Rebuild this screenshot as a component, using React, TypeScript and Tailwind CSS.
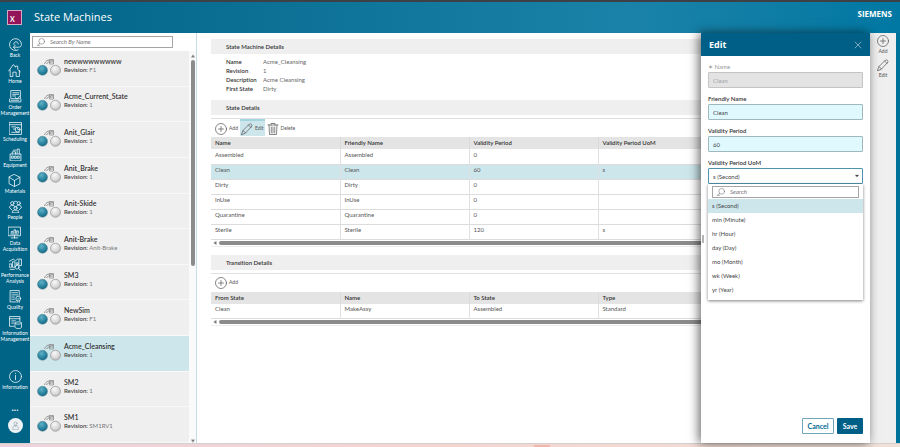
import type { ReactNode } from 'react';
import clsx from 'clsx';

type IconProps = { className?: string };

function Svg({ className, children, box = '0 0 24 24' }: IconProps & { children: ReactNode; box?: string }) {
  return (
    <svg
      viewBox={box}
      className={className}
      fill="none"
      stroke="currentColor"
      strokeWidth={1.4}
      strokeLinecap="round"
      strokeLinejoin="round"
      aria-hidden="true"
    >
      {children}
    </svg>
  );
}

const navIcons: Record<string, ReactNode> = {
  Back: (
    <>
      <path d="M17 22A11 11 0 1 1 23 12c0 3-2 5-5 5H9" />
      <path d="m12 13-4 4 4 4M9 12a4 4 0 0 1 4-5c3 0 4 2 4 4" />
    </>
  ),
  Home: <path d="M1 13 10 1l4 5V4h4v6l5 5M4 11v12h5v-8h6v8h6V12" />,
  Order: (
    <>
      <path d="M4 1h17v15H4zM7 5h11M7 8h11M7 11h5M1 17v5h21v-5" />
      <path d="m12 14 2 3 6-6M4 19h14" />
    </>
  ),
  Scheduling: (
    <>
      <path d="M1 1h22v22H1zM1 5h22M5 9h7M8 13h4" />
      <circle cx="16" cy="14" r="4.500" />
      <path d="M16 11v3h3M5 19h14" />
    </>
  ),
  Equipment: (
    <>
      <path d="M2 23V11h20v12zM6 11V7h6v4M15 11V2h4v9M8 4h5" />
      <path d="M5 15h3v4H5zM10.500 15h3v4h-3zM16 15h3v4h-3z" />
    </>
  ),
  Materials: <path d="m12 1 10 5v12l-10 5-10-5V6zM2 6l10 6 10-6M12 12v11" />,
  People: (
    <>
      <circle cx="6" cy="6" r="3" />
      <circle cx="18" cy="6" r="3" />
      <circle cx="12" cy="15" r="3" />
      <path d="M1 14c0-6 10-6 10-1M13 13c0-6 10-5 10 1M6 23c0-6 12-6 12 0zM9 3c1-1 5-1 6 0M2 15l4 4M22 15l-4 4" />
    </>
  ),
  Data: (
    <>
      <path d="M1 2h22v16H1zM12 18v4M6 22h12" />
      <path d="M6 13v-3h3v3M11 13V7h3v6M16 13V9h3v4M5 15h14" />
    </>
  ),
  Performance: (
    <>
      <path d="M1 11h4v6H1zM7 7h4v10H7zM14 9h3v3h-3zM19 2h4v12h-4zM1 6l7-4 4 3 5-4" />
      <circle cx="15" cy="17" r="3.500" />
      <path d="m18 20 4 3M2 21h8" />
    </>
  ),
  Quality: (
    <>
      <path d="M19 10V1H2v21h10M5 5h11M5 9h11M5 13h5M5 17h5" />
      <circle cx="17" cy="16" r="4.500" />
      <path d="m15 16 1.500 1.500L19 15M15 20v3M19 20v3" />
    </>
  ),
  InfoManagement: (
    <>
      <path d="M20 9V1H1v18h8M1 5h19M5 9h7M5 13h4" />
      <path d="M11 13c0-3 12-3 12 0v8c0 3-12 3-12 0zM11 13c0 3 12 3 12 0" />
    </>
  ),
  Information: (
    <>
      <circle cx="12" cy="12" r="11" />
      <path d="M12 10v8M12 6v.5" />
    </>
  ),
};

const navItems = [
  { icon: 'Back', lines: ['Back'] },
  { icon: 'Home', lines: ['Home'] },
  { icon: 'Order', lines: ['Order', 'Management'] },
  { icon: 'Scheduling', lines: ['Scheduling'] },
  { icon: 'Equipment', lines: ['Equipment'] },
  { icon: 'Materials', lines: ['Materials'] },
  { icon: 'People', lines: ['People'] },
  { icon: 'Data', lines: ['Data', 'Acquisition'] },
  { icon: 'Performance', lines: ['Performance', 'Analysis'] },
  { icon: 'Quality', lines: ['Quality'] },
  { icon: 'InfoManagement', lines: ['Information', 'Management'] },
];

const machines = [
  { name: 'newwwwwwwww', revision: 'F1' },
  { name: 'Acme_Current_State', revision: '1' },
  { name: 'Anit_Glair', revision: '1' },
  { name: 'Anit_Brake', revision: '1' },
  { name: 'Anit-Skide', revision: '1' },
  { name: 'Anit-Brake', revision: 'Anit-Brake' },
  { name: 'SM3', revision: '1' },
  { name: 'NewSim', revision: 'F1' },
  { name: 'Acme_Cleansing', revision: '1' },
  { name: 'SM2', revision: '1' },
  { name: 'SM1', revision: 'SM1RV1' },
];

const details = [
  ['Name', 'Acme_Cleansing'],
  ['Revision', '1'],
  ['Description', 'Acme Cleansing'],
  ['First State', 'Dirty'],
];

const states = [
  ['Assembled', 'Assembled', '0', ''],
  ['Clean', 'Clean', '60', 's'],
  ['Dirty', 'Dirty', '0', ''],
  ['InUse', 'InUse', '0', ''],
  ['Quarantine', 'Quarantine', '0', ''],
  ['Sterile', 'Sterile', '120', 's'],
];

const units = ['s (Second)', 'min (Minute)', 'hr (Hour)', 'day (Day)', 'mo (Month)', 'wk (Week)', 'yr (Year)'];

function AddIcon({ className }: IconProps) {
  return (
    <Svg className={className}>
      <circle cx="12" cy="12" r="11" />
      <path d="M12 7v10M7 12h10" />
    </Svg>
  );
}

function PencilIcon({ className }: IconProps) {
  return (
    <Svg className={className}>
      <path d="m1 23 3-8L17 2c2-2 6 2 5 4L9 20zM15 4l5 5M4 15l5 5" />
    </Svg>
  );
}

function TrashIcon({ className }: IconProps) {
  return (
    <Svg className={className}>
      <path d="M2 4h20M8 4V1h8v3M4 4l1 19h14l1-19M8.500 8v12M12 8v12M15.500 8v12" />
    </Svg>
  );
}

function SearchIcon({ className }: IconProps) {
  return (
    <Svg className={className}>
      <circle cx="14" cy="10" r="8.500" />
      <path d="m8 16-7 6h7" />
    </Svg>
  );
}

function StateIcon({ className }: IconProps) {
  return (
    <svg viewBox="0 0 48 34" className={className} fill="none" aria-hidden="true">
      <defs>
        <radialGradient id="tealBall" cx="0.4" cy="0.3" r="0.75">
          <stop offset="0" stopColor="#5fb0c6" />
          <stop offset="0.6" stopColor="#2a839f" />
          <stop offset="1" stopColor="#0f647f" />
        </radialGradient>
        <radialGradient id="grayBall" cx="0.4" cy="0.3" r="0.75">
          <stop offset="0" stopColor="#f8f8f8" />
          <stop offset="0.6" stopColor="#dadada" />
          <stop offset="1" stopColor="#b5b5b5" />
        </radialGradient>
      </defs>
      <path d="M15 10c3-8 9-10 18-6M19 10c2-4 5-5 9-4" stroke="#777" strokeWidth="1.500" />
      <path d="M25 1h8v9h-8zM25 6h8" stroke="#8a8a8a" strokeWidth="1.500" />
      <circle cx="11" cy="22.500" r="10" fill="url(#tealBall)" stroke="#5d8795" strokeWidth="1" />
      <circle cx="37" cy="22.500" r="10" fill="url(#grayBall)" stroke="#999" strokeWidth="1.500" />
    </svg>
  );
}

function NavItem({ icon, lines }: { icon: string; lines: string[] }) {
  return (
    <a href="#" className="flex flex-col items-center text-white">
      <Svg className="mb-px size-[13px]">{navIcons[icon]}</Svg>
      {lines.map((line) => (
        <span key={line} className="text-[5px] leading-[6px] whitespace-nowrap">
          {line}
        </span>
      ))}
    </a>
  );
}

function SideNav() {
  return (
    <nav className="flex w-[30px] shrink-0 flex-col items-center bg-[#006487] pt-[5px]">
      <div className="flex flex-col items-center gap-[6px]">
        {navItems.map((item) => (
          <NavItem key={item.icon} {...item} />
        ))}
      </div>
      <div className="mt-auto flex flex-col items-center pb-[10px]">
        <NavItem icon="Information" lines={['Information']} />
        <button className="mt-[14px] font-['Open_Sans',sans-serif] text-[8px] leading-[8px] font-bold text-white">...</button>
        <button aria-label="Profile" className="mt-[6px] flex size-[15px] items-center justify-center rounded-full bg-[#eef2f4]">
          <Svg className="size-[9px] text-[#8a9aa3]">
            <circle cx="12" cy="6" r="4" />
            <path d="M5 22v-7l4-3h6l4 3v7zM9 12l3 4 3-4" />
          </Svg>
        </button>
      </div>
    </nav>
  );
}

function MachineList() {
  return (
    <aside className="flex w-[167px] shrink-0 flex-col border-r border-[#c5dbe8] bg-white">
      <div className="flex h-[18px] shrink-0 items-center pl-[2px]">
        <label className="flex h-[12px] w-[141px] items-center gap-[5px] border border-[#a5a5a5] px-1">
          <SearchIcon className="size-2 shrink-0 text-[#555]" />
          <input
            aria-label="Search By Name"
            placeholder="Search By Name"
            className="w-full text-[6px] leading-[8px] italic outline-none placeholder:text-[#777]"
          />
        </label>
      </div>
      <div className="flex min-h-0 flex-1">
        <ul className="flex flex-1 flex-col">
          {machines.map((machine) => (
            <li
              key={machine.name}
              className={clsx(
                'flex flex-1 items-center gap-[3px] border-b border-[#f8f8f8] pb-[2px] pl-[7px]',
                machine.name === 'Acme_Cleansing' ? 'bg-[#cde6eb]' : 'bg-[#efefef]'
              )}
            >
              <StateIcon className="h-[17px] w-6" />
              <div className="pb-[5px]">
                <div className="text-[7px] leading-[10px] font-semibold text-[#333]">{machine.name}</div>
                <div className="text-[6px] leading-[8px] text-[#777]">
                  <span className="font-semibold text-[#444]">Revision:</span> {machine.revision}
                </div>
              </div>
            </li>
          ))}
        </ul>
        <div className="flex w-[7px] flex-col items-center bg-[#fafafa] pt-[3px]">
          <Svg className="size-1 text-[#777]">
            <path d="M2 20 12 4l10 16z" fill="currentColor" />
          </Svg>
          <div className="mt-[2px] h-[53%] w-1 rounded-full bg-[#8b8b8b]" />
          <Svg className="mt-auto size-1 text-[#777]">
            <path d="M2 4h20L12 20z" fill="currentColor" />
          </Svg>
        </div>
      </div>
    </aside>
  );
}

function SectionTitle({ children }: { children: ReactNode }) {
  return <h2 className="h-[15px] bg-[#efefef] pl-[15px] text-[6px] leading-[15px] font-semibold text-[#333]">{children}</h2>;
}

function Toolbar({ children }: { children: ReactNode }) {
  return <div className="mt-[3px] flex gap-px border-t border-[#e0e0e0] pb-px pl-[3px]">{children}</div>;
}

function ToolButton({ label, icon, active }: { label: string; icon: ReactNode; active?: boolean }) {
  return (
    <button
      className={clsx(
        'flex h-[17px] items-center gap-[2px] border-t-2 px-px text-[5px] text-[#555]',
        active ? 'border-[#a3d5de] bg-[#cde6eb]' : 'border-transparent'
      )}
    >
      {icon}
      {label}
    </button>
  );
}

function DataTable({ columns, rows, selected }: { columns: string[]; rows: string[][]; selected?: number }) {
  return (
    <>
      <table className="w-full table-fixed border-collapse text-left text-[6px] leading-[8px]">
        <colgroup>
          <col className="w-[129px]" />
          <col className="w-[129px]" />
          <col className="w-[129px]" />
          <col />
        </colgroup>
        <thead>
          <tr className="h-[12px] bg-[#e4e4e4]">
            {columns.map((column) => (
              <th key={column} className="border-r border-[#dadada] px-1 py-0 font-semibold text-[#333]">
                {column}
              </th>
            ))}
          </tr>
        </thead>
        <tbody>
          {rows.map((row, i) => (
            <tr key={row[0]} className={clsx('h-[15px] border-b border-[#dcdcdc]', i === selected && 'bg-[#cde6eb]')}>
              {row.map((cell, j) => (
                <td key={j} className="border-r border-[#e0e0e0] px-1 pt-0 pb-[3px] text-[#555]">
                  {cell}
                </td>
              ))}
            </tr>
          ))}
        </tbody>
      </table>
      <div className="flex h-[7px] items-center gap-[2px] border-b border-[#ececec] pl-[2px]">
        <Svg className="size-1 text-[#777]">
          <path d="M20 2v20L4 12z" fill="currentColor" />
        </Svg>
        <div className="h-1 flex-1 rounded-l-full bg-[#8b8b8b]" />
      </div>
    </>
  );
}

function Details() {
  return (
    <main className="min-w-0 flex-1 overflow-hidden bg-white pt-[6px] pl-[14px]">
      <SectionTitle>State Machine Details</SectionTitle>
      <dl className="grid grid-cols-[37px_1fr] pt-[3px] pb-[7px] pl-[15px] text-[6px] leading-[9px]">
        {details.map(([label, value]) => (
          <div key={label} className="contents">
            <dt className="font-semibold text-[#333]">{label}</dt>
            <dd className="text-[#666]">{value}</dd>
          </div>
        ))}
      </dl>
      <SectionTitle>State Details</SectionTitle>
      <Toolbar>
        <ToolButton label="Add" icon={<AddIcon className="size-3" />} />
        <ToolButton label="Edit" active icon={<PencilIcon className="size-3" />} />
        <ToolButton label="Delete" icon={<TrashIcon className="size-3" />} />
      </Toolbar>
      <DataTable
        columns={['Name', 'Friendly Name', 'Validity Period', 'Validity Period UoM']}
        rows={states}
        selected={1}
      />
      <div className="h-2" />
      <SectionTitle>Transition Details</SectionTitle>
      <Toolbar>
        <ToolButton label="Add" icon={<AddIcon className="size-3" />} />
      </Toolbar>
      <DataTable
        columns={['From State', 'Name', 'To State', 'Type']}
        rows={[['Clean', 'MakeAssy', 'Assembled', 'Standard']]}
      />
    </main>
  );
}

function Field({ label, value, disabled }: { label: string; value: string; disabled?: boolean }) {
  return (
    <label className={clsx('block text-[6px]', disabled ? 'text-[#999]' : 'font-semibold text-[#333]')}>
      <span className="block leading-[10px]">{label}</span>
      <input
        defaultValue={value}
        disabled={disabled}
        className={clsx(
          'block h-4 w-full rounded-[1px] border px-1 font-normal',
          disabled ? 'border-[#c4c4c4] bg-[#e3e3e3] text-[#a5a5a5]' : 'border-[#9fb8bd] bg-[#e0f9ff] text-[#444]'
        )}
      />
    </label>
  );
}

function EditPanel() {
  return (
    <section className="absolute inset-y-0 right-0 flex w-[169px] flex-col bg-white shadow-[-2px_0_10px_rgba(0,0,0,0.6)]">
      <header className="flex h-[23px] shrink-0 items-center justify-between bg-[#005f87] px-2 text-white">
        <h2 className="font-['Open_Sans',sans-serif] text-[9px] font-bold">Edit</h2>
        <button aria-label="Close">
          <Svg className="size-2">
            <path d="m3 3 18 18M21 3 3 21" />
          </Svg>
        </button>
      </header>
      <form className="flex flex-1 flex-col gap-[6px] px-[7px] pt-[6px] pb-[9px]">
        <Field label="✶ Name" value="Clean" disabled />
        <Field label="Friendly Name" value="Clean" />
        <Field label="Validity Period" value="60" />
        <div className="relative text-[6px]">
          <label htmlFor="uom" className="block leading-[10px] font-semibold text-[#333]">
            Validity Period UoM
          </label>
          <div className="relative">
            <select
              id="uom"
              className="block h-4 w-full appearance-none rounded-[1px] border border-[#4e93ab] bg-white px-1 text-[#444]"
            >
              {units.map((unit) => (
                <option key={unit}>{unit}</option>
              ))}
            </select>
            <Svg className="pointer-events-none absolute top-[6px] right-1 size-1 text-[#444]">
              <path d="M2 6h20L12 18z" fill="currentColor" />
            </Svg>
          </div>
          <div className="absolute inset-x-0 top-full bg-white pt-[2px] pb-[3px] shadow-[0_1px_3px_rgba(0,0,0,0.5)]">
            <label className="mx-1 mb-px flex h-[12px] items-center gap-[5px] border border-[#a5a5a5] px-1">
              <SearchIcon className="size-2 shrink-0 text-[#555]" />
              <input
                aria-label="Search"
                placeholder="Search"
                className="w-full leading-[8px] italic outline-none placeholder:text-[#777]"
              />
            </label>
            <ul role="listbox" aria-label="Validity Period UoM">
              {units.map((unit, i) => (
                <li
                  key={unit}
                  role="option"
                  aria-selected={i === 0}
                  className={clsx('h-[14px] px-1 leading-[14px] text-[#444]', i === 0 && 'bg-[#cde6eb]')}
                >
                  {unit}
                </li>
              ))}
            </ul>
          </div>
        </div>
        <div className="mt-auto flex justify-end gap-[3px] text-[7px] font-bold">
          <button type="button" className="h-4 w-8 rounded-[1px] border border-[#6fa5b9] text-[#00698f]">
            Cancel
          </button>
          <button type="button" className="h-4 w-[26px] rounded-[1px] bg-[#005f87] text-white">
            Save
          </button>
        </div>
      </form>
      <div className="absolute top-[202px] left-px h-2 w-[2px] bg-[#b5b5b5]" />
    </section>
  );
}

function ActionBar() {
  return (
    <div className="flex w-[26px] shrink-0 flex-col items-center gap-1 bg-[#efefef] pt-[2px] text-[5px] leading-[7px] text-[#555]">
      <button className="flex flex-col items-center gap-[1px]">
        <AddIcon className="size-3" />
        Add
      </button>
      <button className="flex flex-col items-center gap-[1px]">
        <PencilIcon className="size-3" />
        Edit
      </button>
    </div>
  );
}

export default function App() {
  return (
    <div className="flex h-screen flex-col overflow-hidden bg-[#00739b] font-['Lato','Open_Sans',sans-serif] [font-variant-ligatures:none]">
      <div className="h-[2px] shrink-0 bg-[#3d4145]" />
      <header className="flex h-[31px] shrink-0 items-center bg-linear-to-r from-[#006487] via-[#1a82a8] via-70% to-[#0078a3] pr-2 pl-[7px] text-white">
        <div className="flex size-[15px] items-end border border-[#d9a9c2] bg-[#94145a] pb-px pl-[2px] text-[7px] leading-[8px] font-bold">
          X
        </div>
        <h1 className="ml-3 font-['Open_Sans',sans-serif] text-[11px]">State Machines</h1>
        <span className="mb-[8px] ml-auto font-['Open_Sans',sans-serif] text-[8px] leading-[10px] font-bold">SIEMENS</span>
      </header>
      <div className="flex min-h-0 flex-1 pr-1">
        <SideNav />
        <MachineList />
        <div className="relative flex min-w-0 flex-1">
          <Details />
          <EditPanel />
        </div>
        <ActionBar />
      </div>
      <div className="flex h-1 shrink-0 justify-center border-t border-[#d5cfcf] bg-linear-to-r from-[#ecd3dc] via-[#f3d5d0] to-[#f0e0d6]">
        <div className="mt-px ml-[184px] w-4 bg-[#f0b5ae]" />
      </div>
    </div>
  );
}
